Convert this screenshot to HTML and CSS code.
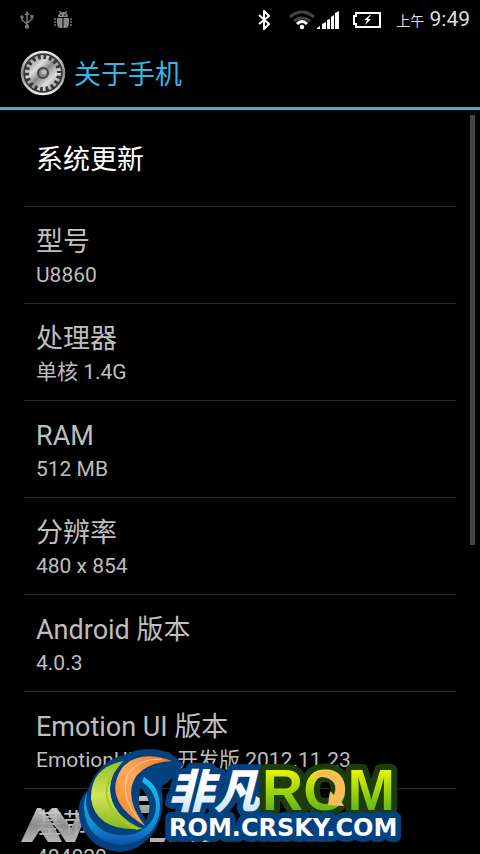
FILE: index.html
```
<!DOCTYPE html>
<html lang="zh-CN">
<head>
  <meta charset="utf-8">
  <meta name="viewport" content="width=device-width, initial-scale=1">
  <title>关于手机</title>
  <link rel="stylesheet" href="styles.css">
</head>
<body>
  <div class="phone">

    <div class="statusbar">
      <div class="notices">
        <svg width="14" height="18" viewBox="0 0 14 18">
          <path d="M7 3V15M2 6v3l5 4M12 5v3l-5 4" fill="none" stroke="#777" stroke-width="1.500"/>
          <path d="M7 0l2.500 4h-5zM10.500 4h3v3h-3z" fill="#777"/>
          <circle cx="2" cy="6" r="1.700" fill="#777"/>
          <circle cx="7" cy="15.500" r="2.200" fill="#777"/>
        </svg>
        <svg width="18" height="18" viewBox="0 0 18 18">
          <path d="M5 0l2 2M13 0l-2 2M0 8h2M0 11h2M0 14h2M16 8h2M16 11h2M16 14h2" stroke="#777" stroke-width="1.300"/>
          <path d="M4 6a5 5 0 0 1 10 0zM3 7h5.500v10H7q-4 0-4-5zM9.500 7H15v5q0 5-4 5H9.500z" fill="#888"/>
          <path d="M6 4h2M10 4h2" stroke="#000"/>
        </svg>
      </div>
      <div class="signals">
        <svg width="13" height="20" viewBox="0 0 13 20">
          <path d="M1 5l10 9-5 5V1l5 5L1 14" fill="none" stroke="#fff" stroke-width="2"/>
        </svg>
        <svg class="icon-wifi" width="26" height="20" viewBox="0 0 26 20">
          <g fill="none" stroke-width="3">
            <path d="M1 7q12-10 24 0M5 11q8-6 16 0" stroke="#444"/>
            <path d="M8 14q5-5 10 0" stroke="#fff"/>
          </g>
          <circle cx="13" cy="17" r="2.200" fill="#fff"/>
        </svg>
        <svg class="icon-bars" width="22" height="18" viewBox="0 0 22 18">
          <path d="M0 18v-1l3-2v3zM5 18v-5l4-2v7zM10 18v-9l3-1v10zM14 18V6l3-2v14zM18 18V2l4-2v18z" fill="#fff"/>
        </svg>
        <svg class="icon-battery" width="28" height="16" viewBox="0 0 28 16">
          <path d="M3 1h24v14H3v-3H1V4h2z" fill="none" stroke="#fff" stroke-width="2"/>
          <path d="M17 3l-6 5h3l-2 5 6-6h-3l3-4z" fill="#fff"/>
        </svg>
        <span class="clock"><small>上午</small> 9:49</span>
      </div>
    </div>

    <header class="titlebar">
      <svg width="46" height="46" viewBox="0 0 46 46">
        <defs>
          <linearGradient id="rim" x1="0" y1="0" x2="0" y2="1">
            <stop offset="0" stop-color="#eee"/>
            <stop offset=".5" stop-color="#888"/>
            <stop offset="1" stop-color="#eee"/>
          </linearGradient>
          <linearGradient id="steel" x1="0" y1="0" x2="1" y2="1">
            <stop offset="0" stop-color="#888"/>
            <stop offset=".3" stop-color="#ddd"/>
            <stop offset=".5" stop-color="#888"/>
            <stop offset=".75" stop-color="#ddd"/>
            <stop offset="1" stop-color="#888"/>
          </linearGradient>
        </defs>
        <circle cx="23" cy="23" r="21" fill="#383838" stroke="url(#rim)" stroke-width="2.500"/>
        <circle cx="23" cy="23" r="15.500" fill="none" stroke="url(#steel)" stroke-width="5" stroke-dasharray="2.700 2.710"/>
        <circle cx="23" cy="23" r="14" fill="url(#steel)"/>
        <circle cx="23" cy="23" r="5" fill="#888" stroke="#444" stroke-width="2"/>
        <circle cx="24" cy="22" r="2.500" fill="#bbb"/>
      </svg>
      <h1>关于手机</h1>
    </header>

    <main class="content">
      <ul class="prefs">
        <li class="active"><h2>系统更新</h2></li>
        <li><h2>型号</h2><p>U8860</p></li>
        <li><h2>处理器</h2><p>单核 1.4G</p></li>
        <li><h2>RAM</h2><p>512 MB</p></li>
        <li><h2>分辨率</h2><p>480 x 854</p></li>
        <li><h2>Android 版本</h2><p>4.0.3</p></li>
        <li><h2>Emotion UI 版本</h2><p>EmotionUI_1.0 开发版 2012.11.23</p></li>
        <li><h2>基带版本</h2><p>404020</p></li>
      </ul>
      <div class="scrollbar"></div>
    </main>

    <!-- site badge over the bottom of the list -->
    <svg class="badge" width="390" height="109" viewBox="15 745 390 109">
      <defs>
        <linearGradient id="grey" x1="0" y1="0" x2="0" y2="1">
          <stop offset="0" stop-color="#ddd"/>
          <stop offset=".5" stop-color="#999"/>
          <stop offset="1" stop-color="#ccc"/>
        </linearGradient>
        <linearGradient id="leaf" x1="0" y1="0" x2="0" y2="1">
          <stop offset="0" stop-color="#93c122"/>
          <stop offset=".5" stop-color="#d3e45a"/>
          <stop offset="1" stop-color="#86b81c"/>
        </linearGradient>
        <linearGradient id="flame" x1="1" y1="0" x2="0" y2="1">
          <stop offset="0" stop-color="#e8741c"/>
          <stop offset=".5" stop-color="#ffab5c"/>
          <stop offset="1" stop-color="#ef8129"/>
        </linearGradient>
        <linearGradient id="sea" x1="0" y1="0" x2="0" y2="1">
          <stop offset="0" stop-color="#19bdf0"/>
          <stop offset=".7" stop-color="#0f8fd2"/>
          <stop offset="1" stop-color="#0c4fa8"/>
        </linearGradient>
        <linearGradient id="ice" x1="0" y1="0" x2="0" y2="1">
          <stop offset=".4" stop-color="#fff"/>
          <stop offset="1" stop-color="#b5dcf7"/>
        </linearGradient>
        <linearGradient id="lime" x1="0" y1="0" x2="0" y2="1">
          <stop offset=".2" stop-color="#e2f500"/>
          <stop offset=".8" stop-color="#63b71b"/>
        </linearGradient>
      </defs>

      <!-- grey mark, mostly behind the badge -->
      <g fill="url(#grey)" opacity=".9">
        <path d="M21 842l16-34h4l11 15 10 19H48l-8-12-8 12z"/>
        <path d="M47 813l5-5h5l14 20 8-17h9L75 842h-9z"/>
        <path d="M137 796h15v5h-15zM136 805h14l2 8h-16zM150 838h16l-2 4h-14zM171 838h6l-3 4h-5zM182 838h6l-3 4h-5zM193 838h7l-3 4h-6zM204 838h12l-3 4h-11z"/>
      </g>

      <path d="M88 790Q98 761 124 755Q146 744 170 753L184 764L168 782L161 787Q166 808 157 827Q142 852 119 852Q91 849 81 825Q74 802 88 790ZM141 788Q135 806 146 820Q155 803 141 788Z" fill="#04417f" fill-rule="evenodd"/>
      <path d="M87 793Q84 805 90 817Q104 840 134 834Q156 825 156 806Q155 790 142 782L144 777Q160 786 160 808Q157 841 121 845Q86 841 84 808Q84 798 87 793Z" fill="url(#sea)"/>
      <path d="M124 761Q90 767 91 799Q96 832 143 829Q111 816 110 789Q111 771 124 761Z" fill="url(#leaf)"/>
      <path d="M120 763Q94 793 118 816Q126 825 138 829" fill="none" stroke="#a3cb2c" stroke-width="2"/>
      <path d="M172 761Q139 749 122 768Q101 800 145 826Q122 796 137 775Q149 762 172 761Z" fill="url(#flame)" stroke="#04417f" stroke-width="4" paint-order="stroke"/>
      <path d="M162 759Q137 758 127 776Q120 798 139 820" fill="none" stroke="#ffd09a" stroke-width="1"/>

      <text class="cn" x="168" y="808">非凡</text>
      <text class="rom" x="262" y="810">ROM</text>
      <path d="M311 782Q314 770 326 770Q344 771 345 790Q345 796 341 801l3 5-16-1 2-14 4 4q4-10-3-15-10-7-20 2Z" fill="#f6bd58"/>
      <text class="site" x="169" y="836">ROM.CRSKY.COM</text>
    </svg>
  </div>
</body>
</html>
```
FILE: styles.css
```
* {
  box-sizing: border-box;
}

body {
  margin: 0;
  background: #000;
  color: #bebebe;
  font-family: Roboto, "Noto Sans CJK SC", sans-serif;
}

h1, h2, p, ul {
  margin: 0;
  padding: 0;
  font-weight: normal;
}

.phone {
  position: relative;
  display: flex;
  flex-direction: column;
  height: 100vh;
  overflow: hidden;
}

.statusbar {
  display: flex;
  flex: none;
  justify-content: space-between;
  align-items: center;
  height: 38px;
  padding: 2px 10px 0 20px;
}

.notices,
.signals {
  display: flex;
  align-items: center;
}

.notices {
  gap: 20px;
}

.icon-wifi {
  margin-left: 18px;
}

.icon-bars {
  margin-left: 2px;
}

.icon-battery {
  margin: 0 15px 0 14px;
}

.clock {
  color: #ddd;
  font-size: 21px;
  line-height: 36px;
}

.clock small {
  font-size: 14px;
}

.titlebar {
  display: flex;
  flex: none;
  align-items: center;
  gap: 8px;
  height: 72px;
  padding: 0 20px;
  border-bottom: 3px solid #3eaedb;
}

.titlebar h1 {
  padding-top: 4px;
  color: #33b5e5;
  font-size: 27px;
  line-height: 36px;
}

.content {
  position: relative;
  flex: 1;
  min-height: 0;
  overflow: hidden;
}

.prefs {
  padding: 0 24px;
  list-style: none;
}

.prefs li {
  display: flex;
  flex-direction: column;
  justify-content: center;
  height: 97px;
  padding: 3px 12px 0;
  border-bottom: 1px solid #2b2b2b;
}

.prefs h2 {
  font-size: 27px;
  line-height: 36px;
}

.prefs p {
  font-size: 21px;
  line-height: 30px;
}

.prefs .active {
  color: #fff;
}

.scrollbar {
  position: absolute;
  top: 5px;
  right: 5px;
  width: 5px;
  height: 430px;
  background: #444;
}

.badge {
  position: absolute;
  left: 15px;
  bottom: 0;
}

.badge text {
  paint-order: stroke;
  stroke-linejoin: round;
  stroke-width: 12px;
}

.cn {
  fill: url(#ice);
  stroke: #04417f;
  font-size: 46px;
  font-style: italic;
  font-weight: 900;
}

.site {
  fill: #fff;
  stroke: #04417f;
  font-family: "DejaVu Sans", sans-serif;
  font-size: 24px;
  font-weight: bold;
}

.rom {
  fill: url(#lime);
  stroke: #1d3b0b;
  font-family: "Liberation Sans", sans-serif;
  font-size: 57px;
  font-weight: bold;
}
```
